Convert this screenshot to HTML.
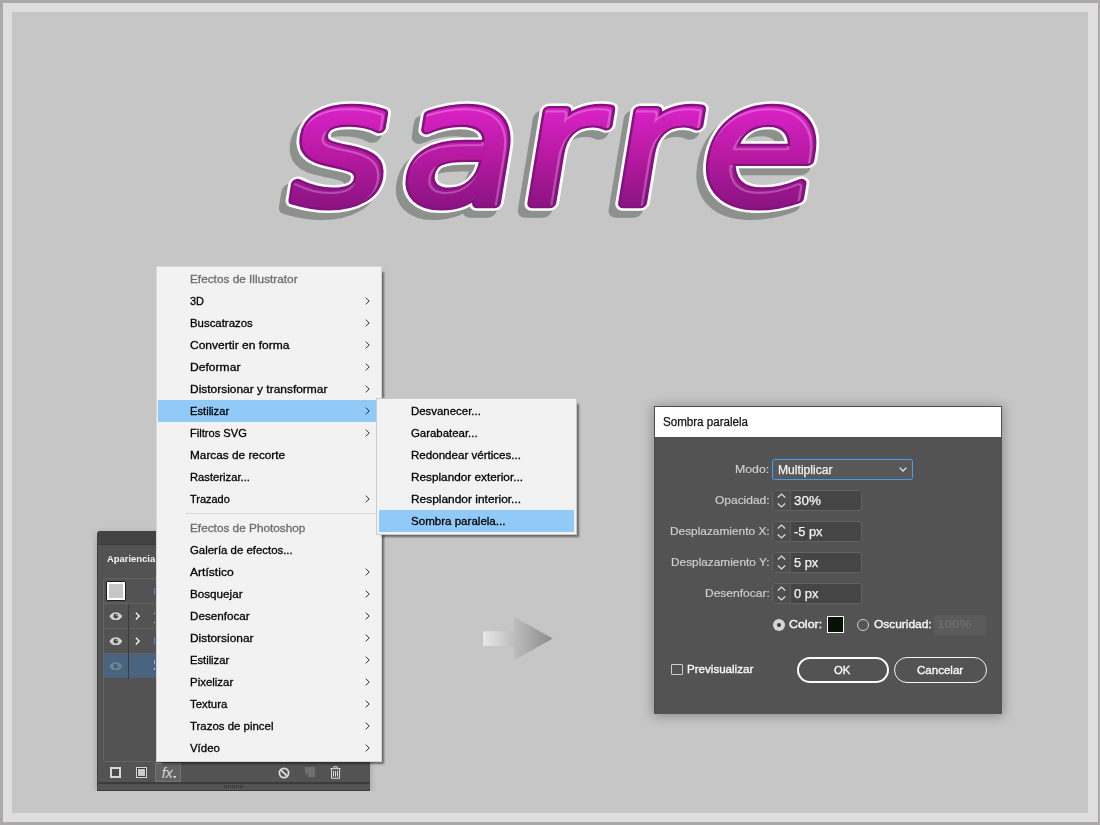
<!DOCTYPE html>
<html lang="es">
<head>
<meta charset="utf-8">
<title>Sombra paralela</title>
<style>
*{box-sizing:border-box;margin:0;padding:0}
html,body{width:1100px;height:825px;overflow:hidden;background:#aaa8a9}
body{position:relative;font-family:"Liberation Sans",sans-serif;font-size:12px;color:#000}
.abs{position:absolute}
#band{left:3px;top:3px;width:1095px;height:819px;background:#dedede}
#canvas{left:12px;top:12px;width:1076px;height:801px;background:#c6c6c6}
/* menus */
.menu{position:absolute;background:#f2f2f2;box-shadow:0 0 0 1px #d6d6d6 inset, 4px 4px 2px -2px rgba(0,0,0,.48)}
#submenu{box-shadow:0 0 0 1px #cbcbcb inset, 4px 4px 2px -2px rgba(0,0,0,.48)}
.mi{position:absolute;left:2px;right:2px;height:22px;line-height:22px;white-space:nowrap;font-size:11.5px}
.mi span{position:absolute;left:32px;top:-0.4px;transform-origin:0 50%;display:inline-block;-webkit-text-stroke:0.3px currentColor}
.mi.dis{color:#6d6d6d}
.mi.hl{background:#91c9f7}
.mi svg{position:absolute;right:10.3px;top:6.6px;width:5px;height:8px}
.sep{position:absolute;left:30px;right:2px;height:1px;background:#d7d7d7}

/* panel */
#panel{position:absolute;left:97px;top:531px;width:273px;height:260px;background:#535353;border-radius:4px 4px 0 0;box-shadow:inset 1px 0 0 #404040, inset 0 -1px 0 #3a3a3a, 0 2px 6px rgba(0,0,0,.22);clip-path:inset(-8px -8px 0 -8px);overflow:hidden}
#panel .ptop{position:absolute;left:0;top:0;right:0;height:13.8px;background:#434343;border-bottom:1px solid #3c3c3c}
#panel .ptitle{position:absolute;top:21.2px;font-weight:bold;font-size:9.5px;line-height:14px;color:#f4f4f4;transform-origin:0 50%;white-space:nowrap}
.plist{position:absolute;left:6px;top:47px;width:262px;height:184px;border:1px solid #646464;border-radius:3px}
.prow{position:absolute;left:0;right:0;height:25px;border-bottom:1px solid #626262}
.prow.sel{background:#4a6480;border-bottom:0;height:24.3px}
.pdiv{position:absolute;left:24px;top:25px;width:1px;height:75px;background:#3b3b3b}
.sw{position:absolute;left:2px;top:2px;width:20px;height:20px;border:1px solid #1f1f1f;background:#fff;border-radius:1px}
.sw b{position:absolute;left:2px;top:2px;width:14px;height:14px;background:#c6c6c6}
.eye{position:absolute;left:4.7px;width:13.6px;height:8.6px}
.chev{position:absolute;left:31px;width:5.4px;height:8.2px}
.sl{position:absolute;left:50.2px;width:1.3px}
.ptools{position:absolute;left:0;top:232px;right:0;height:19px}
.ic1{position:absolute;left:13px;top:4px;width:11px;height:11px;border:2px solid #d6d6d6;background:#4c4c4c}
.ic2{position:absolute;left:39px;top:4px;width:11px;height:11px;border:1px solid #d6d6d6;background:#3d3d3d}
.ic2 b{position:absolute;left:1px;top:1px;width:7px;height:7px;background:#cacaca}
.fxb{position:absolute;left:58px;top:0;width:26px;height:19px;background:#626262;border:1px solid #737373}
.fxb span{position:absolute;left:5.7px;top:0.6px;font:italic 14.5px/16px "Liberation Sans",sans-serif;color:#d2d2d2;letter-spacing:-0.2px}
.fxb svg{position:absolute;left:16.8px;top:12.2px;width:3.6px;height:2.4px}
.no{position:absolute;left:180.5px;top:3.5px;width:12px;height:12px}
.pg{position:absolute;left:208px;top:4.3px;width:10px;height:10px}
.tr{position:absolute;left:233px;top:2.5px;width:11px;height:13px}
.pline{position:absolute;left:0;right:0;top:251px;height:1.5px;background:#3b3b3b}
.pgrip{position:absolute;left:127px;top:253.5px;width:19px;height:3.5px;background:repeating-linear-gradient(90deg,#3a3a3a 0,#3a3a3a 1px,transparent 1px,transparent 2px)}

/* dialog */
#dialog{position:absolute;width:348px;height:308px;background:#535353;border:1px solid #535353;border-top-color:#4c4c4c;border-left-color:#4c4c4c;box-shadow:0 1px 11px 1px rgba(0,0,0,.3)}
#dialog .din{position:absolute;left:-1px;top:-1px;width:348px;height:308px}
#dialog .dtitle{position:absolute;left:1px;top:1px;right:1px;height:30px;background:#fff;border-bottom:0}
#dialog .t{position:absolute;font-size:11.5px;line-height:16px;height:16px;white-space:nowrap;transform-origin:0 50%}
.t.lab{color:#cdcdcd;-webkit-text-stroke:0.2px currentColor}.t.v{font-size:12px !important;color:#f2f2f2;-webkit-text-stroke:0.25px currentColor}.t.w{color:#fafafa;-webkit-text-stroke:0.35px currentColor}.t.dim{color:#727272}.t.ttl{font-size:12px !important;color:#111;-webkit-text-stroke:0.25px currentColor}
.dd{position:absolute;left:118px;top:53px;width:141px;height:21px;border:1px solid #469cf0;border-radius:2.5px;background:#585858}
.dd svg{position:absolute;right:4.6px;top:6.8px;width:8px;height:5px}
.sp{position:absolute;left:118px;width:90px;height:20.5px;border:1px solid #626262;border-radius:3px;background:#454545;overflow:hidden}
.spb{position:absolute;left:0;top:0;bottom:0;width:18px;background:#4e4e4e;border-right:1px solid #5c5c5c}
.spb svg{position:absolute;left:4px;top:2.2px;width:9px;height:15px}
.rad{position:absolute;top:212.5px;width:12px;height:12px;border-radius:50%}
.rad.on{left:119.4px;background:#d4d4d4}.rad.on b{position:absolute;left:4px;top:4px;width:4px;height:4px;border-radius:50%;background:#3a3a3a}
.rad.off{left:203px;border:1px solid #d0d0d0}
.csw{position:absolute;left:172.5px;top:210.3px;width:17.5px;height:16.6px;border:1px solid #fff;background:#051204}
.disf{position:absolute;left:279.5px;top:208.5px;width:52.5px;height:20px;background:#5b5b5b;border-radius:2px}
.cb{position:absolute;left:17px;top:257.5px;width:11.5px;height:11.5px;border:1px solid #cfcfcf;border-radius:1px}
.btn{position:absolute;top:251px;height:26px;border-radius:13px}
.btn.ok{left:142.5px;width:92.5px;border:2px solid #fafafa}
.btn.ca{left:239.5px;width:93px;border:1.2px solid #f4f4f4}
</style>
</head>
<body>
<div id="band" class="abs"></div>
<div id="canvas" class="abs"></div>
<svg id="wordart" class="abs" style="left:260px;top:80px" width="590" height="160" viewBox="260 80 590 160">
<defs>
<linearGradient id="wg" gradientUnits="userSpaceOnUse" x1="0" y1="-100" x2="0" y2="6"><stop offset="0" stop-color="#da22c8"/><stop offset="0.5" stop-color="#b4199f"/><stop offset="1" stop-color="#86137f"/></linearGradient>
<mask id="wm" maskUnits="userSpaceOnUse" x="260" y="80" width="590" height="160"><text aria-hidden="true" x="250.80 350.35 456.68 536.95 614.77" y="0" transform="matrix(1.13 0 -0.165 1 0 203)" font-family="DejaVu Sans, Liberation Sans, sans-serif" font-size="168" stroke-linejoin="round" vector-effect="non-scaling-stroke" fill="#fff" stroke="#fff" stroke-width="6">sarre</text></mask>
</defs>
<text aria-hidden="true" x="250.80 350.35 456.68 536.95 614.77" y="0" transform="matrix(1.13 0 -0.165 1 -6.7 209.7)" font-family="DejaVu Sans, Liberation Sans, sans-serif" font-size="168" stroke-linejoin="round" vector-effect="non-scaling-stroke" fill="#8c918d" stroke="#8c918d" stroke-width="16.4">sarre</text>
<text aria-hidden="true" x="250.80 350.35 456.68 536.95 614.77" y="0" transform="matrix(1.13 0 -0.165 1 0 203)" font-family="DejaVu Sans, Liberation Sans, sans-serif" font-size="168" stroke-linejoin="round" vector-effect="non-scaling-stroke" fill="#ffffff" stroke="#ffffff" stroke-width="16.4">sarre</text>
<text aria-hidden="true" x="250.80 350.35 456.68 536.95 614.77" y="0" transform="matrix(1.13 0 -0.165 1 0 203)" font-family="DejaVu Sans, Liberation Sans, sans-serif" font-size="168" stroke-linejoin="round" vector-effect="non-scaling-stroke" fill="#85107f" stroke="#85107f" stroke-width="11.2">sarre</text>
<text x="250.80 350.35 456.68 536.95 614.77" y="0" transform="matrix(1.13 0 -0.165 1 0 203)" font-family="DejaVu Sans, Liberation Sans, sans-serif" font-size="168" stroke-linejoin="round" vector-effect="non-scaling-stroke" fill="url(#wg)" stroke="url(#wg)" stroke-width="6">sarre</text>
<g mask="url(#wm)"><text aria-hidden="true" x="250.80 350.35 456.68 536.95 614.77" y="0" transform="matrix(1.13 0 -0.165 1 -2.4 206.2)" font-family="DejaVu Sans, Liberation Sans, sans-serif" font-size="168" stroke-linejoin="round" vector-effect="non-scaling-stroke" fill="none" stroke="#ffffff" stroke-opacity="0.25" stroke-width="8">sarre</text><text aria-hidden="true" x="250.80 350.35 456.68 536.95 614.77" y="0" transform="matrix(1.13 0 -0.165 1 -2.4 206.2)" font-family="DejaVu Sans, Liberation Sans, sans-serif" font-size="168" stroke-linejoin="round" vector-effect="non-scaling-stroke" fill="url(#wg)" stroke="url(#wg)" stroke-width="3.6">sarre</text></g>
</svg>
<div id="panel">
<div class="ptop"></div>
<div class="ptitle" style="left:9.71px;transform:scaleX(0.9924)">Apariencia</div>
<div class="plist">
  <div class="prow" style="top:0;height:25px"></div>
  <div class="prow" style="top:25px"></div>
  <div class="prow" style="top:50px"></div>
  <div class="prow sel" style="top:75px"></div>
  <div class="pdiv"></div>
  <div class="sw"><b></b></div>
  <svg class="eye" viewBox="0 0 14 9" style="top:32.5px;opacity:1"><path d="M0.2 4.5 C2.2 1.2 4.6 0.2 7 0.2 C9.4 0.2 11.8 1.2 13.8 4.5 C11.8 7.8 9.4 8.8 7 8.8 C4.6 8.8 2.2 7.8 0.2 4.5 Z" fill="#d2d2d2"/><circle cx="7" cy="4.4" r="2.5" fill="#4a4a4a"/><circle cx="8" cy="3.5" r="0.8" fill="#d2d2d2"/></svg><svg class="chev" viewBox="0 0 6 9" style="top:33px"><path d="M1 0.8 L4.6 4.5 L1 8.2" fill="none" stroke="#f4f4f4" stroke-width="1.5"/></svg>
  <svg class="eye" viewBox="0 0 14 9" style="top:57.5px;opacity:1"><path d="M0.2 4.5 C2.2 1.2 4.6 0.2 7 0.2 C9.4 0.2 11.8 1.2 13.8 4.5 C11.8 7.8 9.4 8.8 7 8.8 C4.6 8.8 2.2 7.8 0.2 4.5 Z" fill="#d2d2d2"/><circle cx="7" cy="4.4" r="2.5" fill="#4a4a4a"/><circle cx="8" cy="3.5" r="0.8" fill="#d2d2d2"/></svg><svg class="chev" viewBox="0 0 6 9" style="top:58px"><path d="M1 0.8 L4.6 4.5 L1 8.2" fill="none" stroke="#f4f4f4" stroke-width="1.5"/></svg>
  <svg class="eye" viewBox="0 0 14 9" style="top:82.5px;opacity:0.28"><path d="M0.2 4.5 C2.2 1.2 4.6 0.2 7 0.2 C9.4 0.2 11.8 1.2 13.8 4.5 C11.8 7.8 9.4 8.8 7 8.8 C4.6 8.8 2.2 7.8 0.2 4.5 Z" fill="#d2d2d2"/><circle cx="7" cy="4.4" r="2.5" fill="#4a4a4a"/><circle cx="8" cy="3.5" r="0.8" fill="#d2d2d2"/></svg>
  
<i class="sl" style="top:8.9px;height:7.4px;background:#4c9bf0;opacity:0.85"></i><i class="sl" style="top:34.0px;height:1.2px;background:#f0f0f0;opacity:0.8"></i><i class="sl" style="top:42.7px;height:1.2px;background:#f0f0f0;opacity:0.8"></i><i class="sl" style="top:58.3px;height:7.4px;background:#4c9bf0;opacity:0.85"></i><i class="sl" style="top:81.2px;height:4.3px;background:#8cc4ff;opacity:0.8"></i><i class="sl" style="top:89.4px;height:1.2px;background:#f0f0f0;opacity:0.7"></i>
</div>
<div class="ptools">
  <div class="ic1"></div>
  <div class="ic2"><b></b></div>
  <div class="fxb"><span>fx</span><svg viewBox="0 0 3.6 2.4"><path d="M0 0 H3.6 L1.8 2.4 Z" fill="#dcdcdc"/></svg></div>
  <svg class="no" viewBox="0 0 12 12"><circle cx="6" cy="6" r="4.6" fill="none" stroke="#dadada" stroke-width="1.8"/><path d="M2.8 2.8 L9.2 9.2" stroke="#dadada" stroke-width="1.8"/></svg>
  <svg class="pg" viewBox="0 0 10 10"><path d="M0 0 H10 V10 H3.5 L0 6.5 Z" fill="#6f6f6f"/><path d="M0 6.5 H3.5 V10 Z" fill="#5c5c5c"/></svg>
  <svg class="tr" viewBox="0 0 11 13"><path d="M0.3 2.6 H10.7 M3.8 2.4 V0.7 H7.2 V2.4 M1.5 3 V12.3 H9.5 V3 M3.5 4.8 V10.6 M5.5 4.8 V10.6 M7.5 4.8 V10.6" fill="none" stroke="#dadada" stroke-width="1"/></svg>
</div>
<div class="pline"></div>
<div class="pgrip"></div>
</div>
<div class="menu" id="mainmenu" style="left:156px;top:266px;width:226px;height:496px">
<div class="mi dis" style="top:2px"><span style="left:31.56px;transform:scaleX(1.0265)">Efectos de Illustrator</span></div>
<div class="mi " style="top:24px"><span style="left:32.12px;transform:scaleX(0.9523)">3D</span><svg viewBox="0 0 5 8"><path d="M0.8 0.6 L4.2 4 L0.8 7.4" fill="none" stroke="#2c2c2c" stroke-width="1"/></svg></div>
<div class="mi " style="top:46px"><span style="left:31.59px;transform:scaleX(0.991)">Buscatrazos</span><svg viewBox="0 0 5 8"><path d="M0.8 0.6 L4.2 4 L0.8 7.4" fill="none" stroke="#2c2c2c" stroke-width="1"/></svg></div>
<div class="mi " style="top:68px"><span style="left:31.90px;transform:scaleX(1.0444)">Convertir en forma</span><svg viewBox="0 0 5 8"><path d="M0.8 0.6 L4.2 4 L0.8 7.4" fill="none" stroke="#2c2c2c" stroke-width="1"/></svg></div>
<div class="mi " style="top:90px"><span style="left:31.53px;transform:scaleX(1.0522)">Deformar</span><svg viewBox="0 0 5 8"><path d="M0.8 0.6 L4.2 4 L0.8 7.4" fill="none" stroke="#2c2c2c" stroke-width="1"/></svg></div>
<div class="mi " style="top:112px"><span style="left:31.54px;transform:scaleX(1.0388)">Distorsionar y transformar</span><svg viewBox="0 0 5 8"><path d="M0.8 0.6 L4.2 4 L0.8 7.4" fill="none" stroke="#2c2c2c" stroke-width="1"/></svg></div>
<div class="mi hl" style="top:134px"><span style="left:31.61px;transform:scaleX(0.9723)">Estilizar</span><svg viewBox="0 0 5 8"><path d="M0.8 0.6 L4.2 4 L0.8 7.4" fill="none" stroke="#2c2c2c" stroke-width="1"/></svg></div>
<div class="mi " style="top:156px"><span style="left:31.61px;transform:scaleX(0.9662)">Filtros SVG</span><svg viewBox="0 0 5 8"><path d="M0.8 0.6 L4.2 4 L0.8 7.4" fill="none" stroke="#2c2c2c" stroke-width="1"/></svg></div>
<div class="mi " style="top:178px"><span style="left:31.56px;transform:scaleX(1.0265)">Marcas de recorte</span></div>
<div class="mi " style="top:200px"><span style="left:31.60px;transform:scaleX(0.9761)">Rasterizar...</span></div>
<div class="mi " style="top:222px"><span style="left:32.28px;transform:scaleX(0.9523)">Trazado</span><svg viewBox="0 0 5 8"><path d="M0.8 0.6 L4.2 4 L0.8 7.4" fill="none" stroke="#2c2c2c" stroke-width="1"/></svg></div>
<div class="sep" style="top:247px"></div>
<div class="mi dis" style="top:251px"><span style="left:31.56px;transform:scaleX(1.0258)">Efectos de Photoshop</span></div>
<div class="mi " style="top:273px"><span style="left:31.93px;transform:scaleX(0.9915)">Galería de efectos...</span></div>
<div class="mi " style="top:295px"><span style="left:31.70px;transform:scaleX(1.0521)">Artístico</span><svg viewBox="0 0 5 8"><path d="M0.8 0.6 L4.2 4 L0.8 7.4" fill="none" stroke="#2c2c2c" stroke-width="1"/></svg></div>
<div class="mi " style="top:317px"><span style="left:31.57px;transform:scaleX(1.0155)">Bosquejar</span><svg viewBox="0 0 5 8"><path d="M0.8 0.6 L4.2 4 L0.8 7.4" fill="none" stroke="#2c2c2c" stroke-width="1"/></svg></div>
<div class="mi " style="top:339px"><span style="left:31.57px;transform:scaleX(1.0132)">Desenfocar</span><svg viewBox="0 0 5 8"><path d="M0.8 0.6 L4.2 4 L0.8 7.4" fill="none" stroke="#2c2c2c" stroke-width="1"/></svg></div>
<div class="mi " style="top:361px"><span style="left:31.55px;transform:scaleX(1.0351)">Distorsionar</span><svg viewBox="0 0 5 8"><path d="M0.8 0.6 L4.2 4 L0.8 7.4" fill="none" stroke="#2c2c2c" stroke-width="1"/></svg></div>
<div class="mi " style="top:383px"><span style="left:31.61px;transform:scaleX(0.9723)">Estilizar</span><svg viewBox="0 0 5 8"><path d="M0.8 0.6 L4.2 4 L0.8 7.4" fill="none" stroke="#2c2c2c" stroke-width="1"/></svg></div>
<div class="mi " style="top:405px"><span style="left:31.58px;transform:scaleX(0.9956)">Pixelizar</span><svg viewBox="0 0 5 8"><path d="M0.8 0.6 L4.2 4 L0.8 7.4" fill="none" stroke="#2c2c2c" stroke-width="1"/></svg></div>
<div class="mi " style="top:427px"><span style="left:32.27px;transform:scaleX(0.9886)">Textura</span><svg viewBox="0 0 5 8"><path d="M0.8 0.6 L4.2 4 L0.8 7.4" fill="none" stroke="#2c2c2c" stroke-width="1"/></svg></div>
<div class="mi " style="top:449px"><span style="left:32.27px;transform:scaleX(0.9939)">Trazos de pincel</span><svg viewBox="0 0 5 8"><path d="M0.8 0.6 L4.2 4 L0.8 7.4" fill="none" stroke="#2c2c2c" stroke-width="1"/></svg></div>
<div class="mi " style="top:471px"><span style="left:31.70px;transform:scaleX(0.9939)">Vídeo</span><svg viewBox="0 0 5 8"><path d="M0.8 0.6 L4.2 4 L0.8 7.4" fill="none" stroke="#2c2c2c" stroke-width="1"/></svg></div>
</div>
<div class="menu" id="submenu" style="left:376px;top:398px;width:201px;height:137px">
<div class="mi " style="top:2px;left:3px;right:3px"><span style="left:31.59px;transform:scaleX(0.9929)">Desvanecer...</span></div>
<div class="mi " style="top:24px;left:3px;right:3px"><span style="left:31.93px;transform:scaleX(0.9918)">Garabatear...</span></div>
<div class="mi " style="top:46px;left:3px;right:3px"><span style="left:31.57px;transform:scaleX(1.0058)">Redondear vértices...</span></div>
<div class="mi " style="top:68px;left:3px;right:3px"><span style="left:31.56px;transform:scaleX(1.0244)">Resplandor exterior...</span></div>
<div class="mi " style="top:90px;left:3px;right:3px"><span style="left:31.55px;transform:scaleX(1.0367)">Resplandor interior...</span></div>
<div class="mi hl" style="top:112px;left:3px;right:3px"><span style="left:31.98px;transform:scaleX(1.005)">Sombra paralela...</span></div>
</div>
<svg id="arrow" class="abs" style="left:480px;top:614px" width="76" height="50" viewBox="480 614 76 50">
<defs><linearGradient id="ag" gradientUnits="userSpaceOnUse" x1="483" y1="0" x2="553" y2="0"><stop offset="0" stop-color="#e8e8e8"/><stop offset="0.44" stop-color="#bebebe"/><stop offset="1" stop-color="#8a8a8a"/></linearGradient></defs>
<path d="M483 631.3 H514 V616.8 L552.8 638.5 L514 660.3 V645.9 H483 Z" fill="url(#ag)"/>
</svg>
<div id="dialog" style="left:654px;top:406px">
<div class="din">
<div class="dtitle"></div>
<span class="t lab" style="left:81.42px;top:55.0px;transform:scaleX(1.0689)">Modo:</span>
<span class="t lab" style="left:60.96px;top:86.0px;transform:scaleX(1.0413)">Opacidad:</span>
<span class="t lab" style="left:15.95px;top:117.0px;transform:scaleX(1.0318)">Desplazamiento X:</span>
<span class="t lab" style="left:16.85px;top:148.0px;transform:scaleX(1.0292)">Desplazamiento Y:</span>
<span class="t lab" style="left:50.84px;top:179.0px;transform:scaleX(1.0437)">Desenfocar:</span>
<div class="dd"><svg viewBox="0 0 8 5"><path d="M0.6 0.6 L4 4 L7.4 0.6" fill="none" stroke="#e6e6e6" stroke-width="1.3"/></svg></div>
<div class="sp" style="top:84px"><div class="spb"><svg viewBox="0 0 9 15"><path d="M0.8 4.5 L4.5 1 L8.2 4.5 M0.8 10.5 L4.5 14 L8.2 10.5" fill="none" stroke="#dedede" stroke-width="1.25"/></svg></div></div>
<div class="sp" style="top:115px"><div class="spb"><svg viewBox="0 0 9 15"><path d="M0.8 4.5 L4.5 1 L8.2 4.5 M0.8 10.5 L4.5 14 L8.2 10.5" fill="none" stroke="#dedede" stroke-width="1.25"/></svg></div></div>
<div class="sp" style="top:146px"><div class="spb"><svg viewBox="0 0 9 15"><path d="M0.8 4.5 L4.5 1 L8.2 4.5 M0.8 10.5 L4.5 14 L8.2 10.5" fill="none" stroke="#dedede" stroke-width="1.25"/></svg></div></div>
<div class="sp" style="top:177px"><div class="spb"><svg viewBox="0 0 9 15"><path d="M0.8 4.5 L4.5 1 L8.2 4.5 M0.8 10.5 L4.5 14 L8.2 10.5" fill="none" stroke="#dedede" stroke-width="1.25"/></svg></div></div>
<div class="rad on"><b></b></div><div class="csw"></div><div class="rad off"></div><div class="disf"></div>
<div class="cb"></div><div class="btn ok"></div><div class="btn ca"></div>
<span class="t v" style="left:124.13px;top:55.8px;transform:scaleX(1.0114)">Multiplicar</span>
<span class="t v" style="left:139.63px;top:86.8px;transform:scaleX(1.117)">30%</span>
<span class="t v" style="left:139.59px;top:117.8px;transform:scaleX(1.0699)">-5 px</span>
<span class="t v" style="left:139.99px;top:148.8px;transform:scaleX(1.0688)">5 px</span>
<span class="t v" style="left:139.85px;top:179.8px;transform:scaleX(1.0749)">0 px</span>
<span class="t w" style="left:135.48px;top:210.0px;transform:scaleX(1.0794)">Color:</span>
<span class="t w" style="left:219.56px;top:210.0px;transform:scaleX(1.0374)">Oscuridad:</span>
<span class="t dim" style="left:283.49px;top:210.0px;transform:scaleX(1.1755)">100%</span>
<span class="t w" style="left:33.07px;top:255.0px;transform:scaleX(1.0068)">Previsualizar</span>
<span class="t w" style="left:180.49px;top:255.8px;transform:scaleX(0.9802)">OK</span>
<span class="t w" style="left:262.62px;top:255.8px;transform:scaleX(1.0023)">Cancelar</span>
<span class="t ttl" style="left:8.68px;top:7.7px;transform:scaleX(0.9651)">Sombra paralela</span>
</div>
</div>
</body>
</html>
